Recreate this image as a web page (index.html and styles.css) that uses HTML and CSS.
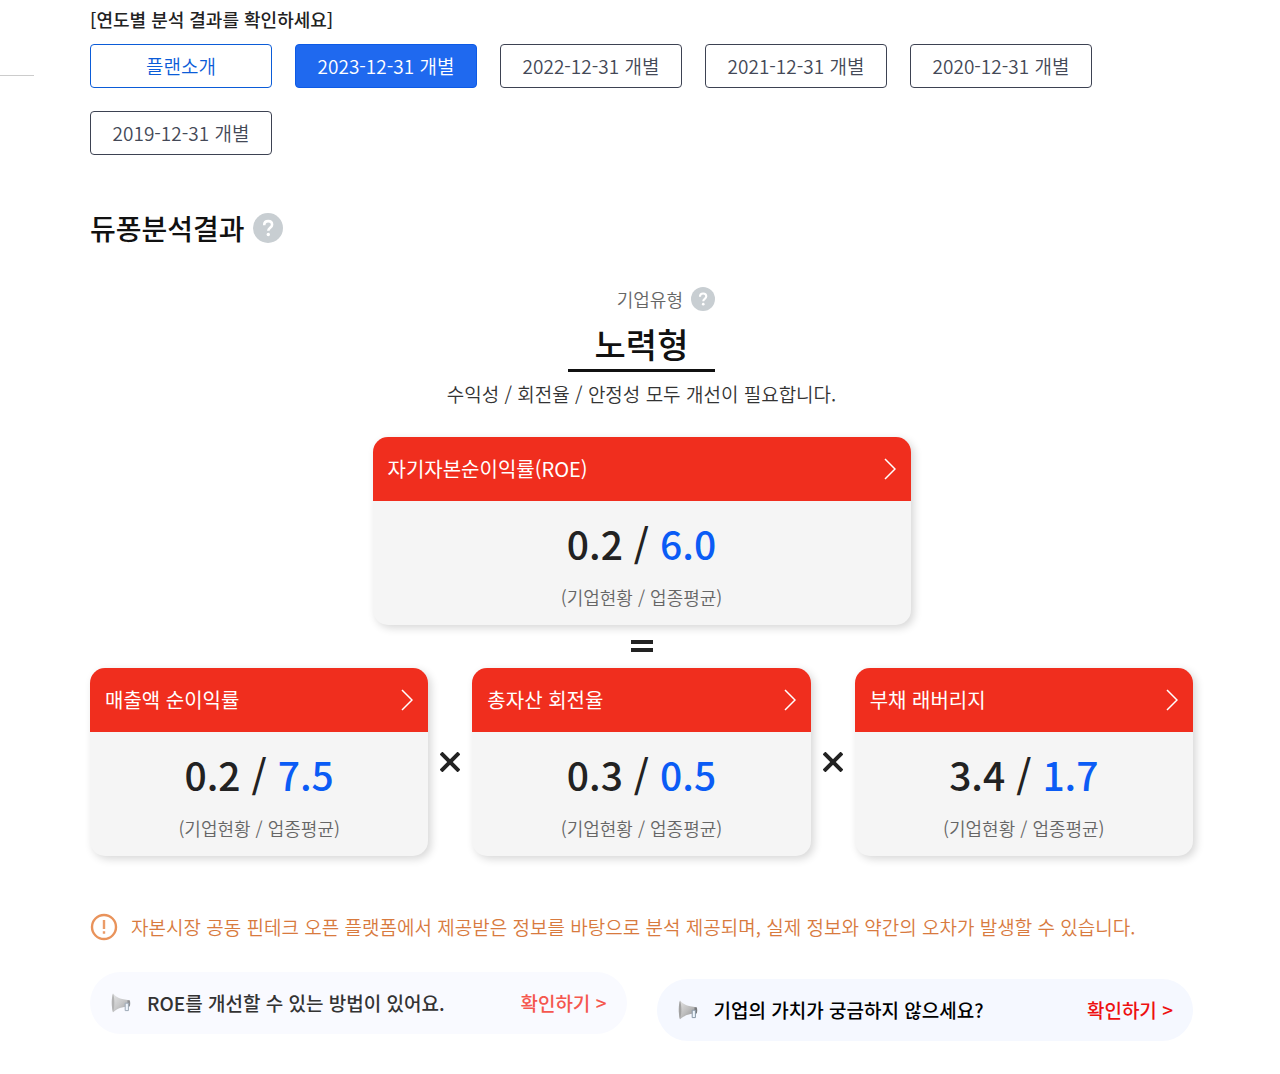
FILE: index.html
```html
<!DOCTYPE html>
<html lang="ko">
<head>
    <meta charset="UTF-8">
    <meta name="viewport" content="width=device-width, initial-scale=1.0">
    <title>듀퐁분석결과</title>
    <link rel="stylesheet" href="styles.css">
</head>
<body>
    <!-- shared icons -->
    <svg class="sprite" aria-hidden="true">
        <defs>
            <linearGradient id="horn-fill" x1="0" y1="0" x2="1" y2="1">
                <stop offset="0" stop-color="#e4e4e4"/>
                <stop offset="0.5" stop-color="#bdbdbd"/>
                <stop offset="1" stop-color="#858585"/>
            </linearGradient>
        </defs>
        <symbol id="question" viewBox="0 0 30 30">
            <circle cx="15" cy="15" r="15" fill="#c8ced2"/>
            <path d="M11.2 12.2c0-2.5 1.6-4.1 4-4.1s3.9 1.4 3.9 3.6c0 3-3.8 3.2-3.8 6.1" fill="none" stroke="#fff" stroke-width="2.6"/>
            <circle cx="15.3" cy="21.5" r="1.7" fill="#fff"/>
        </symbol>
        <symbol id="chevron" viewBox="0 0 12 22">
            <path d="M1 1l10 10L1 21" fill="none" stroke="#fff" stroke-width="1.5"/>
        </symbol>
        <symbol id="horn" viewBox="0 0 20 20">
            <path d="M2 0.6C5 4.4 9.5 6.6 18.5 7.2c.8 2 .7 4.6 0 6.2-8 .1-12 2-16.500 5.800C.4 14.500.4 4.700 2 .6z" fill="url(#horn-fill)"/>
            <path d="M2 .6c1.800 4.500 1.800 14 0 18.600C.4 14.500.4 4.700 2 .6z" fill="#a2a2a2"/>
            <path d="M16.500 7.200l2.300.2c.6 2 .5 4.200 0 5.800l-2.300.1z" fill="#77797c"/>
            <path d="M14.200 10.200h3.200v7.400h-3.200z" fill="#eef5fc" stroke="#8796a5" stroke-width="1"/>
        </symbol>
    </svg>

    <div class="layout">
        <aside class="side"></aside>

        <main class="content">
            <h2 class="year-title">[연도별 분석 결과를 확인하세요]</h2>
            <div class="years">
                <button type="button" class="year intro">플랜소개</button>
                <button type="button" class="year active">2023-12-31 개별</button>
                <button type="button" class="year">2022-12-31 개별</button>
                <button type="button" class="year">2021-12-31 개별</button>
                <button type="button" class="year">2020-12-31 개별</button>
                <button type="button" class="year">2019-12-31 개별</button>
            </div>

            <div class="heading">
                <h1>듀퐁분석결과</h1>
                <button type="button" class="help" aria-label="듀퐁분석 도움말"><svg><use href="#question"/></svg></button>
            </div>

            <section class="type">
                <div class="type-box">
                    <div class="type-label">
                        <span>기업유형</span>
                        <button type="button" class="help small" aria-label="기업유형 도움말"><svg><use href="#question"/></svg></button>
                    </div>
                    <strong class="type-name">노력형</strong>
                </div>
                <p class="type-desc">수익성 / 회전율 / 안정성 모두 개선이 필요합니다.</p>
            </section>

            <section class="result">
                <div class="card main-card">
                    <a href="#" class="card-head">자기자본순이익률(ROE)<svg class="arrow"><use href="#chevron"/></svg></a>
                    <div class="card-body">
                        <p class="score">0.2 / <span>6.0</span></p>
                        <p class="note">(기업현황 / 업종평균)</p>
                    </div>
                </div>

                <svg class="equals" viewBox="0 0 22 12" role="img" aria-label="="><path d="M0 2h22M0 10h22"/></svg>

                <div class="factors">
                    <div class="card">
                        <a href="#" class="card-head">매출액 순이익률<svg class="arrow"><use href="#chevron"/></svg></a>
                        <div class="card-body">
                            <p class="score">0.2 / <span>7.5</span></p>
                            <p class="note">(기업현황 / 업종평균)</p>
                        </div>
                    </div>
                    <svg class="times" viewBox="0 0 20 20" role="img" aria-label="×"><path d="M1 1l18 18M19 1L1 19"/></svg>
                    <div class="card">
                        <a href="#" class="card-head">총자산 회전율<svg class="arrow"><use href="#chevron"/></svg></a>
                        <div class="card-body">
                            <p class="score">0.3 / <span>0.5</span></p>
                            <p class="note">(기업현황 / 업종평균)</p>
                        </div>
                    </div>
                    <svg class="times" viewBox="0 0 20 20" role="img" aria-label="×"><path d="M1 1l18 18M19 1L1 19"/></svg>
                    <div class="card">
                        <a href="#" class="card-head">부채 래버리지<svg class="arrow"><use href="#chevron"/></svg></a>
                        <div class="card-body">
                            <p class="score">3.4 / <span>1.7</span></p>
                            <p class="note">(기업현황 / 업종평균)</p>
                        </div>
                    </div>
                </div>
            </section>

            <div class="warning">
                <svg viewBox="0 0 28 28" aria-hidden="true">
                    <circle cx="14" cy="14" r="12" fill="none" stroke="#e9935b" stroke-width="2.4"/>
                    <path d="M14 7v9M14 18.2v2.6" stroke="#eb9c68" stroke-width="2.4"/>
                </svg>
                <p>자본시장 공동 핀테크 오픈 플랫폼에서 제공받은 정보를 바탕으로 분석 제공되며, 실제 정보와 약간의 오차가 발생할 수 있습니다.</p>
            </div>

            <div class="banners">
                <div class="banner faded">
                    <svg class="horn" aria-hidden="true"><use href="#horn"/></svg>
                    <span>ROE를 개선할 수 있는 방법이 있어요.</span>
                    <a href="#">확인하기 &gt;</a>
                </div>
                <div class="banner">
                    <svg class="horn" aria-hidden="true"><use href="#horn"/></svg>
                    <span>기업의 가치가 궁금하지 않으세요?</span>
                    <a href="#">확인하기 &gt;</a>
                </div>
            </div>
        </main>
    </div>
</body>
</html>
```

FILE: styles.css
```css
* {
    box-sizing: border-box;
}
body {
    margin: 0;
    font-family: "Noto Sans CJK KR", sans-serif;
    font-size: 19px;
    line-height: 30px;
    color: #222;
    background-color: #fff;
}
h1, h2, p {
    margin: 0;
}
a {
    text-decoration: none;
}
button {
    font-family: inherit;
    cursor: pointer;
}
.sprite {
    position: absolute;
    width: 0;
    height: 0;
}
.layout {
    display: flex;
}
.side {
    flex: none;
    width: 34px;
    margin-top: 75px;
    border-top: 1px solid #ccc;
}
.content {
    flex: 1;
    min-width: 0;
    padding: 4px 87px 32px 56px;
}

/* year buttons */
.year-title {
    font-size: 18px;
    font-weight: 500;
    line-height: 30px;
}
.years {
    display: flex;
    flex-wrap: wrap;
    gap: 23px;
    margin-top: 10px;
}
.year {
    width: 182px;
    height: 44px;
    padding: 0 0 2px;
    font-size: 19px;
    font-weight: 350;
    color: #444957;
    background-color: #fff;
    border: 1px solid #3d4252;
    border-radius: 4px;
}
.year.intro {
    color: #0b5cd8;
    border-color: #0b5cd8;
}
.year.active {
    color: #fff;
    background-color: #1f69ef;
    border-color: #0d5ae5;
}

/* title */
.heading {
    display: flex;
    align-items: center;
    gap: 8px;
    margin-top: 52px;
}
h1 {
    font-size: 28px;
    font-weight: 500;
    line-height: 42px;
    color: #111;
}
.help {
    width: 30px;
    height: 30px;
    padding: 0;
    background: none;
    border: 0;
}
.help svg {
    display: block;
    width: 100%;
    height: 100%;
}
.help.small {
    width: 24px;
    height: 24px;
}

/* company type */
.type {
    display: flex;
    flex-direction: column;
    align-items: center;
    margin-top: 35px;
}
.type-box {
    min-width: 147px;
}
.type-label {
    display: flex;
    align-items: center;
    justify-content: flex-end;
    gap: 8px;
    font-size: 18px;
    font-weight: 350;
    color: #666;
}
.type-name {
    display: block;
    padding-top: 4px;
    font-size: 34px;
    font-weight: 500;
    line-height: 51px;
    text-align: center;
    color: #111;
    border-bottom: 3px solid #111;
}
.type-desc {
    margin-top: 7px;
    font-weight: 350;
    color: #333;
}

/* cards */
.result {
    margin-top: 28px;
}
.card {
    flex: 1;
    overflow: hidden;
    background-color: #f5f5f5;
    border-radius: 15px;
    box-shadow: 3px 3px 8px rgba(0, 0, 0, 0.16);
}
.main-card {
    max-width: 538px;
    margin: 0 auto;
}
.card-head {
    display: flex;
    align-items: center;
    justify-content: space-between;
    height: 64px;
    padding: 0 15px;
    font-size: 20px;
    font-weight: 400;
    color: #fff;
    background-color: #f02e1e;
}
.arrow {
    width: 12px;
    height: 22px;
}
.card-body {
    padding: 12px 0 8px;
    text-align: center;
}
.score {
    font-size: 39px;
    font-weight: 500;
    line-height: 60px;
}
.score span {
    color: #0b5cf5;
}
.note {
    margin-top: 4px;
    font-size: 18px;
    font-weight: 350;
    line-height: 40px;
    color: #666;
}
.equals {
    display: block;
    width: 22px;
    height: 12px;
    margin: 15px auto 16px;
    stroke: #222;
    stroke-width: 4;
}
.factors {
    display: flex;
    align-items: center;
    gap: 12px;
}
.times {
    width: 20px;
    height: 20px;
    stroke: #222;
    stroke-width: 4;
}

/* notice */
.warning {
    display: flex;
    align-items: center;
    gap: 13px;
    margin-top: 56px;
    font-weight: 350;
    color: #d87a3e;
}
.warning svg {
    flex: none;
    width: 28px;
    height: 28px;
}

/* banners, the first one is caught mid-slide */
.banners {
    display: grid;
    grid-template-columns: 1fr 1fr;
    gap: 30px;
    min-height: 69px;
    margin-top: 30px;
}
.banner {
    display: flex;
    align-items: center;
    align-self: end;
    gap: 15px;
    height: 62px;
    padding: 0 20px;
    font-weight: 500;
    color: #000;
    background-color: #f5f8ff;
    border-radius: 31px;
}
.banner.faded {
    align-self: start;
    color: #333;
    background-color: #f9faff;
}
.banner a {
    margin-left: auto;
    color: #ee1111;
}
.banner.faded a {
    color: #f5574e;
}
.horn {
    width: 22px;
    height: 20px;
}
.faded .horn {
    opacity: 0.8;
}
```
